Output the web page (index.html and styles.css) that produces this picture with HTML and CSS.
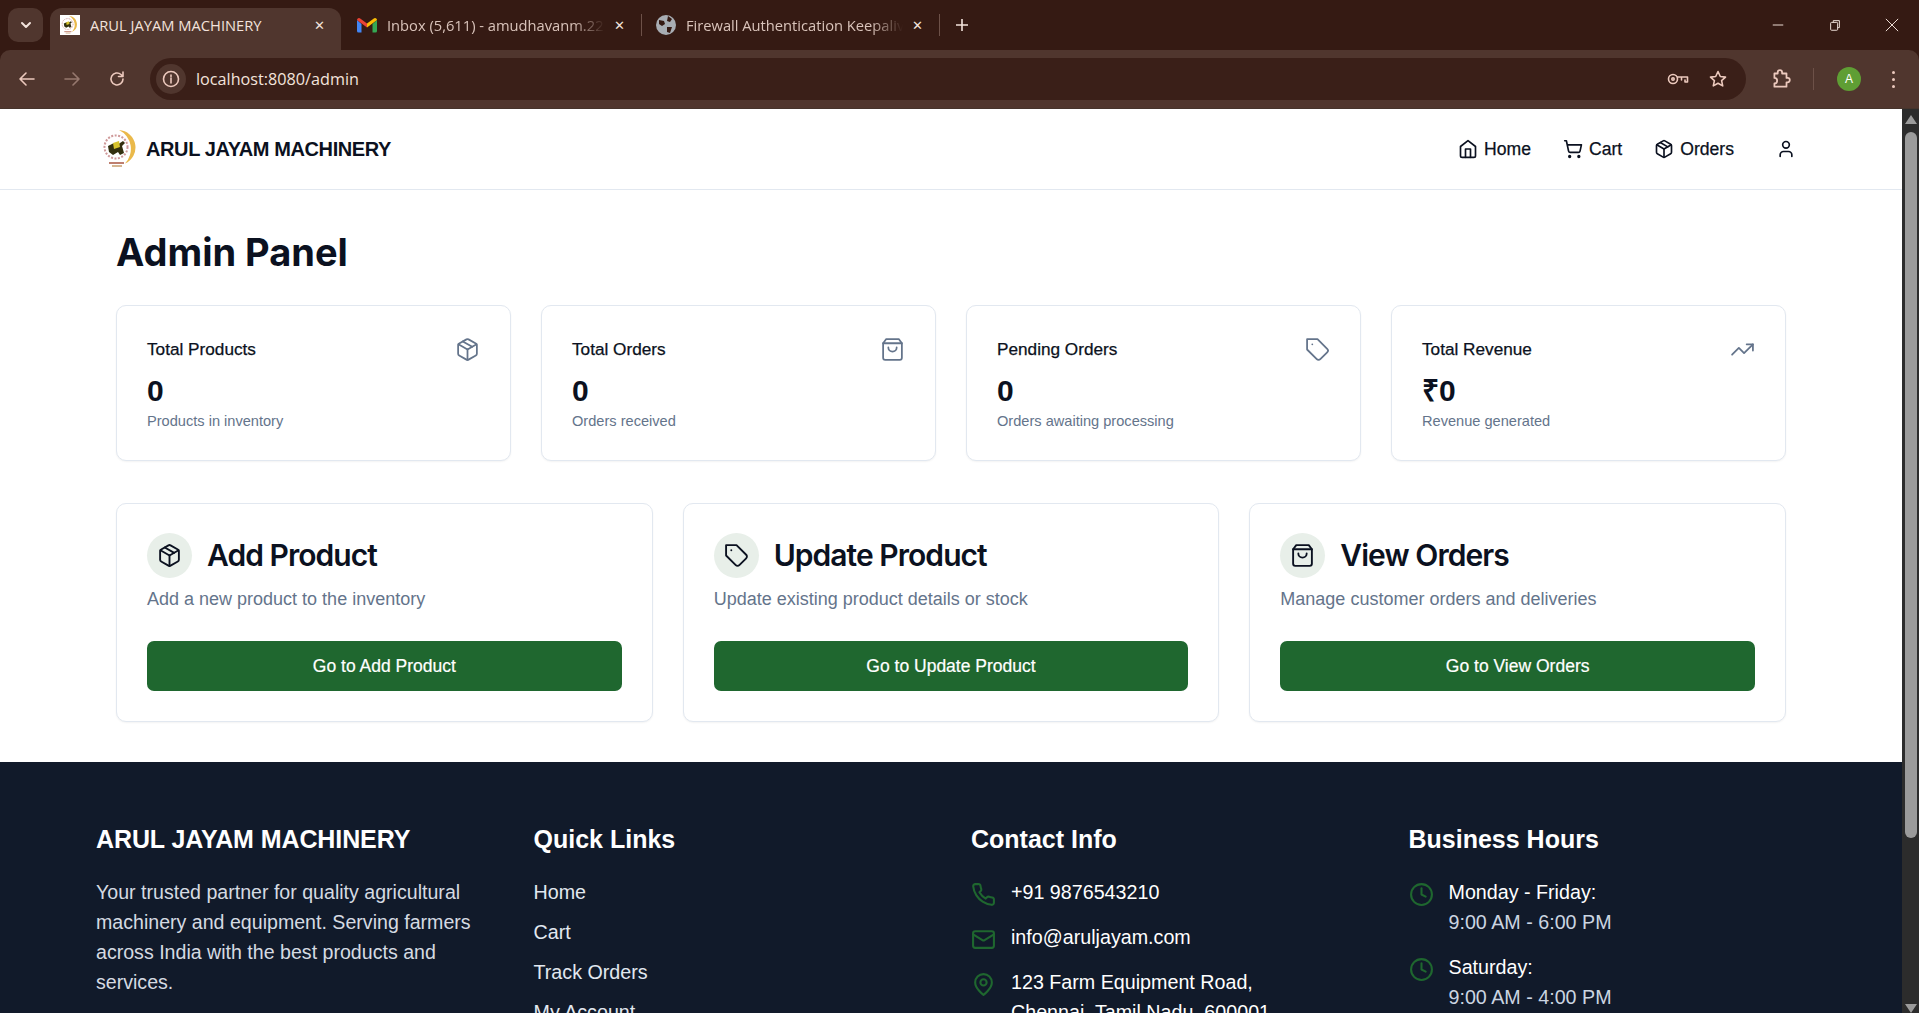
FILE: index.html
```html
<!DOCTYPE html>
<html lang="en">
<head>
    <meta charset="UTF-8">
    <title>ARUL JAYAM MACHINERY</title>
    <link rel="stylesheet" href="styles.css">
</head>
<body>
    <svg class="sprite" xmlns="http://www.w3.org/2000/svg">
        <symbol id="i-home" viewBox="0 0 24 24"><path d="m3 9 9-7 9 7v11a2 2 0 0 1-2 2H5a2 2 0 0 1-2-2z"/><polyline points="9 22 9 12 15 12 15 22"/></symbol>
        <symbol id="i-cart" viewBox="0 0 24 24"><circle cx="8" cy="21" r="1"/><circle cx="19" cy="21" r="1"/><path d="M2.05 2.05h2l2.66 12.42a2 2 0 0 0 2 1.58h9.78a2 2 0 0 0 1.95-1.57l1.65-7.43H5.12"/></symbol>
        <symbol id="i-package" viewBox="0 0 24 24"><path d="m7.5 4.27 9 5.15"/><path d="M21 8a2 2 0 0 0-1-1.73l-7-4a2 2 0 0 0-2 0l-7 4A2 2 0 0 0 3 8v8a2 2 0 0 0 1 1.73l7 4a2 2 0 0 0 2 0l7-4A2 2 0 0 0 21 16Z"/><path d="m3.3 7 8.7 5 8.7-5"/><path d="M12 22V12"/></symbol>
        <symbol id="i-user" viewBox="0 0 24 24"><path d="M19 21v-2a4 4 0 0 0-4-4H9a4 4 0 0 0-4 4v2"/><circle cx="12" cy="7" r="4"/></symbol>
        <symbol id="i-bag" viewBox="0 0 24 24"><path d="M6 2 3 6v14a2 2 0 0 0 2 2h14a2 2 0 0 0 2-2V6l-3-4Z"/><path d="M3 6h18"/><path d="M16 10a4 4 0 0 1-8 0"/></symbol>
        <symbol id="i-tag" viewBox="0 0 24 24"><path d="M12 2H2v10l9.29 9.29c.94.94 2.48.94 3.42 0l6.58-6.58c.94-.94.94-2.48 0-3.42L12 2Z"/><path d="M7 7h.01"/></symbol>
        <symbol id="i-trend" viewBox="0 0 24 24"><polyline points="22 7 13.5 15.5 8.5 10.5 2 17"/><polyline points="16 7 22 7 22 13"/></symbol>
        <symbol id="i-phone" viewBox="0 0 24 24"><path d="M22 16.92v3a2 2 0 0 1-2.18 2 19.79 19.79 0 0 1-8.63-3.07 19.5 19.5 0 0 1-6-6 19.79 19.79 0 0 1-3.07-8.67A2 2 0 0 1 4.11 2h3a2 2 0 0 1 2 1.72 12.84 12.84 0 0 0 .7 2.81 2 2 0 0 1-.45 2.11L8.09 9.91a16 16 0 0 0 6 6l1.27-1.27a2 2 0 0 1 2.11-.45 12.84 12.84 0 0 0 2.81.7A2 2 0 0 1 22 16.92z"/></symbol>
        <symbol id="i-mail" viewBox="0 0 24 24"><rect x="2" y="4" width="20" height="16" rx="2"/><path d="m22 7-8.97 5.7a1.94 1.94 0 0 1-2.06 0L2 7"/></symbol>
        <symbol id="i-pin" viewBox="0 0 24 24"><path d="M20 10c0 6-8 12-8 12s-8-6-8-12a8 8 0 0 1 16 0Z"/><circle cx="12" cy="10" r="3"/></symbol>
        <symbol id="i-clock" viewBox="0 0 24 24"><circle cx="12" cy="12" r="10"/><polyline points="12 6 12 12 16 14"/></symbol>
        <symbol id="i-logo" viewBox="0 0 40 42">
            <path d="M19 2A17.500 17.500 0 0 1 25 35.500A21 21 0 0 0 19 2Z" fill="#eab94a"/>
            <circle cx="16" cy="19" r="11.500" fill="none" stroke="#cf9a9a" stroke-width="2" stroke-dasharray="2 1.500"/>
            <path d="M8 18l6-3 3 2 6-4 2 2-3 3 2 7-4 2-2-3-5 3-4-3z" fill="#33300f"/>
            <path d="M13 15l6-2 1 6-6 2z" fill="#d7c32c"/>
            <path d="M9 35h15" stroke="#a9553f" stroke-width="1.500" fill="none"/>
            <path d="M12 38h10" stroke="#b9854a" stroke-width="1.200" fill="none"/>
        </symbol>
    </svg>

    <div class="browser">
        <div class="tabstrip">
            <div class="tab-menu">
                <svg class="chrome-icon" viewBox="0 0 16 16"><path d="M4 6l4 4 4-4"/></svg>
            </div>
            <div class="tab tab-active">
                <span class="favicon"><svg viewBox="0 0 40 42"><use href="#i-logo"/></svg></span>
                <span class="tab-title">ARUL JAYAM MACHINERY</span>
                <span class="tab-close">✕</span>
            </div>
            <div class="tab tab-gmail">
                <svg class="tab-icon" viewBox="0 0 20 16">
                    <path d="M0 3v11a1.500 1.500 0 0 0 1.500 1.500H4.500V7z" fill="#4285f4"/>
                    <path d="M15.500 7v8.500h3a1.500 1.500 0 0 0 1.500-1.500V3z" fill="#34a853"/>
                    <path d="M0 3a2 2 0 0 1 3.200-1.600L10 6.500v4L0 3z" fill="#ea4335"/>
                    <path d="M20 3a2 2 0 0 0-3.200-1.600L10 6.500v4L20 3z" fill="#fbbc04"/>
                </svg>
                <span class="tab-title faded">Inbox (5,611) - amudhavanm.22</span>
                <span class="tab-close">✕</span>
            </div>
            <span class="tab-divider"></span>
            <div class="tab tab-fire">
                <svg class="tab-icon" viewBox="0 0 20 20">
                    <circle cx="10" cy="10" r="10" fill="#a8adb3"/>
                    <path d="M3 5l5 1 1 3-3 2-3-2zM12 1l4 3-2 3-3-1zM11 12l5 0-2 6-3-1z" fill="#351a13"/>
                </svg>
                <span class="tab-title faded">Firewall Authentication Keepalive</span>
                <span class="tab-close">✕</span>
            </div>
            <span class="tab-divider"></span>
            <svg class="tab-plus" viewBox="0 0 16 16"><path d="M8 2v12M2 8h12"/></svg>
            <div class="window-controls">
                <svg viewBox="0 0 16 16"><path d="M2 8h12"/></svg>
                <svg viewBox="0 0 16 16"><rect x="3" y="5" width="8" height="9" rx="1"/><path d="M6 5V3h7v8h-2"/></svg>
                <svg viewBox="0 0 16 16"><path d="M1 1l14 14M15 1L1 15"/></svg>
            </div>
        </div>
        <div class="toolbar">
            <svg class="chrome-icon tool-btn" viewBox="0 0 20 20"><path d="M17 10H3M9 4l-6 6 6 6"/></svg>
            <svg class="chrome-icon tool-btn dim" viewBox="0 0 20 20"><path d="M3 10h14M11 4l6 6-6 6"/></svg>
            <svg class="chrome-icon tool-btn" viewBox="0 0 20 20"><path d="M16 10a6 6 0 1 1-2-4.500L16 7.500M16 3v4.500h-4.500"/></svg>
            <div class="omnibox">
                <span class="site-info">
                    <svg class="chrome-icon" viewBox="0 0 20 20"><circle cx="10" cy="10" r="7.500"/><path d="M10 9v5M10 6v1.500"/></svg>
                </span>
                <span class="url">localhost:8080/admin</span>
                <svg class="chrome-icon omni-key" viewBox="0 0 24 20"><circle cx="7" cy="10" r="4.500"/><circle cx="7" cy="10" r="1.200"/><path d="M11.500 8h10v5h-2.500v-2M15.500 8v3"/></svg>
                <svg class="chrome-icon omni-star" viewBox="0 0 20 20"><path d="M10 2.500l2.300 5 5.200.6-3.900 3.500 1.100 5.300-4.700-2.700-4.700 2.700 1.100-5.300-3.900-3.500 5.200-.6z"/></svg>
            </div>
            <svg class="chrome-icon tool-ext" viewBox="0 0 20 20"><path d="M4 5h3V4a2 2 0 0 1 4 0v1h4v4h1a2 2 0 0 1 0 4h-1v4H4v-3a2 2 0 0 0 0-5z"/></svg>
            <span class="tool-divider"></span>
            <span class="avatar">A</span>
            <span class="tool-dots"><i></i><i></i><i></i></span>
        </div>

        <div class="viewport">
            <div class="page">
                <header class="site-nav">
                    <div class="wrap nav-inner">
                        <a class="brand">
                            <svg class="brand-logo" viewBox="0 0 40 42"><use href="#i-logo"/></svg>
                            <span>ARUL JAYAM MACHINERY</span>
                        </a>
                        <nav class="nav-links">
                            <a><svg class="ic"><use href="#i-home"/></svg>Home</a>
                            <a><svg class="ic"><use href="#i-cart"/></svg>Cart</a>
                            <a><svg class="ic"><use href="#i-package"/></svg>Orders</a>
                            <a class="nav-user"><svg class="ic"><use href="#i-user"/></svg></a>
                        </nav>
                    </div>
                </header>

                <main class="wrap main">
                    <h1>Admin Panel</h1>

                    <section class="stats">
                        <div class="card stat">
                            <div class="stat-head"><span>Total Products</span><svg class="ic stat-ic"><use href="#i-package"/></svg></div>
                            <div class="stat-value">0</div>
                            <div class="stat-sub">Products in inventory</div>
                        </div>
                        <div class="card stat">
                            <div class="stat-head"><span>Total Orders</span><svg class="ic stat-ic"><use href="#i-bag"/></svg></div>
                            <div class="stat-value">0</div>
                            <div class="stat-sub">Orders received</div>
                        </div>
                        <div class="card stat">
                            <div class="stat-head"><span>Pending Orders</span><svg class="ic stat-ic"><use href="#i-tag"/></svg></div>
                            <div class="stat-value">0</div>
                            <div class="stat-sub">Orders awaiting processing</div>
                        </div>
                        <div class="card stat">
                            <div class="stat-head"><span>Total Revenue</span><svg class="ic stat-ic"><use href="#i-trend"/></svg></div>
                            <div class="stat-value">₹0</div>
                            <div class="stat-sub">Revenue generated</div>
                        </div>
                    </section>

                    <section class="actions">
                        <div class="card action">
                            <div class="action-head"><span class="action-ic"><svg class="ic"><use href="#i-package"/></svg></span><h2>Add Product</h2></div>
                            <p>Add a new product to the inventory</p>
                            <a class="btn">Go to Add Product</a>
                        </div>
                        <div class="card action">
                            <div class="action-head"><span class="action-ic"><svg class="ic"><use href="#i-tag"/></svg></span><h2>Update Product</h2></div>
                            <p>Update existing product details or stock</p>
                            <a class="btn">Go to Update Product</a>
                        </div>
                        <div class="card action">
                            <div class="action-head"><span class="action-ic"><svg class="ic"><use href="#i-bag"/></svg></span><h2>View Orders</h2></div>
                            <p>Manage customer orders and deliveries</p>
                            <a class="btn">Go to View Orders</a>
                        </div>
                    </section>
                </main>

                <footer class="site-footer">
                    <div class="wrap footer-grid">
                        <div>
                            <h3 class="footer-brand">ARUL JAYAM MACHINERY</h3>
                            <p class="about">Your trusted partner for quality agricultural machinery and equipment. Serving farmers across India with the best products and services.</p>
                        </div>
                        <div>
                            <h3>Quick Links</h3>
                            <ul class="links">
                                <li>Home</li>
                                <li>Cart</li>
                                <li>Track Orders</li>
                                <li>My Account</li>
                            </ul>
                        </div>
                        <div>
                            <h3>Contact Info</h3>
                            <ul class="info">
                                <li><svg class="ic"><use href="#i-phone"/></svg><span>+91 9876543210</span></li>
                                <li><svg class="ic"><use href="#i-mail"/></svg><span>info@aruljayam.com</span></li>
                                <li><svg class="ic"><use href="#i-pin"/></svg><span>123 Farm Equipment Road,<br>Chennai, Tamil Nadu, 600001</span></li>
                            </ul>
                        </div>
                        <div>
                            <h3>Business Hours</h3>
                            <ul class="info">
                                <li><svg class="ic"><use href="#i-clock"/></svg><span>Monday - Friday:<br><em>9:00 AM - 6:00 PM</em></span></li>
                                <li><svg class="ic"><use href="#i-clock"/></svg><span>Saturday:<br><em>9:00 AM - 4:00 PM</em></span></li>
                            </ul>
                        </div>
                    </div>
                </footer>
            </div>

            <div class="scrollbar">
                <span class="sb-arrow"></span>
                <span class="sb-thumb"></span>
                <span class="sb-arrow sb-down"></span>
            </div>
        </div>
    </div>
</body>
</html>
```

FILE: styles.css
```css
* {
    box-sizing: border-box;
}

html, body {
    margin: 0;
    padding: 0;
    height: 100%;
    overflow: hidden;
}

body {
    font-family: "Liberation Sans", Arial, sans-serif;
    color: #0b1120;
    background: #fff;
}

.sprite {
    position: absolute;
    width: 0;
    height: 0;
}

.browser {
    display: flex;
    flex-direction: column;
    width: 1919px;
    height: 1013px;
    background: #351a13;
}

/* browser chrome */
.chrome-icon {
    fill: none;
    stroke: #ecc9bd;
    stroke-width: 1.6;
    stroke-linecap: round;
    stroke-linejoin: round;
}

.tabstrip {
    display: flex;
    align-items: flex-end;
    height: 50px;
    padding-left: 8px;
    flex-shrink: 0;
}

.tab-menu {
    display: flex;
    align-items: center;
    justify-content: center;
    width: 35px;
    height: 34px;
    margin-bottom: 8px;
    margin-right: 7px;
    border-radius: 10px;
    background: #50362e;
}

.tab-menu svg {
    width: 16px;
    height: 16px;
    stroke: #f3e3dc;
    stroke-width: 2;
}

.tab {
    display: flex;
    align-items: center;
    height: 42px;
    padding-bottom: 9px;
    font-family: "Open Sans", sans-serif;
    font-size: 14.7px;
    color: #d9c3ba;
}

.tab-active {
    width: 291px;
    padding-left: 10px;
    border-radius: 12px 12px 0 0;
    background: #50362e;
    color: #f3e3dc;
}

.favicon {
    display: flex;
    width: 20px;
    height: 20px;
    background: #fff;
    margin-right: 10px;
    flex-shrink: 0;
}

.tab-title {
    flex: 1;
    white-space: nowrap;
    overflow: hidden;
}

.faded {
    -webkit-mask-image: linear-gradient(to right, #000 85%, transparent);
    mask-image: linear-gradient(to right, #000 85%, transparent);
}

.tab-close {
    width: 16px;
    margin: 0 14px 0 6px;
    font-size: 13px;
    text-align: center;
    color: #f3e3dc;
}

.tab-gmail {
    width: 300px;
    padding-left: 16px;
}

.tab-fire {
    width: 297px;
    padding-left: 14px;
}

.tab-icon {
    width: 20px;
    height: 20px;
    margin-right: 10px;
    flex-shrink: 0;
}

.tab-divider {
    width: 1px;
    height: 22px;
    margin-bottom: 14px;
    background: #6d5148;
}

.tab-plus {
    width: 16px;
    height: 16px;
    margin: 0 0 17px 14px;
    fill: none;
    stroke: #f3e3dc;
    stroke-width: 1.6;
}

.window-controls {
    display: flex;
    align-items: center;
    gap: 43px;
    margin-left: auto;
    margin-right: 20px;
    margin-bottom: 18px;
}

.window-controls svg {
    width: 14px;
    height: 14px;
    fill: none;
    stroke: #f3e3dc;
    stroke-width: 1.1;
}

.toolbar {
    display: flex;
    align-items: center;
    height: 59px;
    padding-left: 17px;
    background: #50362e;
    border-radius: 10px 10px 0 0;
    border-bottom: 1px solid #46342c;
    flex-shrink: 0;
}

.tool-btn {
    width: 20px;
    height: 20px;
    margin-right: 25px;
}

.dim {
    opacity: 0.45;
}

.omnibox {
    display: flex;
    align-items: center;
    width: 1596px;
    height: 42px;
    margin-left: -2px;
    padding: 0 18px 0 6px;
    border-radius: 21px;
    background: #3a1f18;
}

.site-info {
    display: flex;
    align-items: center;
    justify-content: center;
    width: 30px;
    height: 30px;
    border-radius: 50%;
    background: #50362e;
}

.site-info svg {
    width: 20px;
    height: 20px;
}

.url {
    margin-left: 10px;
    font-family: "Open Sans", sans-serif;
    font-size: 16.2px;
    color: #f3e3dc;
}

.omni-key {
    width: 24px;
    height: 20px;
    margin-left: auto;
}

.omni-star {
    width: 20px;
    height: 20px;
    margin-left: 18px;
}

.tool-ext {
    width: 22px;
    height: 22px;
    margin-left: 24px;
}

.tool-divider {
    width: 1px;
    height: 22px;
    margin-left: 21px;
    background: #6d5148;
}

.avatar {
    display: flex;
    align-items: center;
    justify-content: center;
    width: 24px;
    height: 24px;
    margin-left: 23px;
    border-radius: 50%;
    background: #5f9e34;
    color: #fff;
    font-size: 12px;
}

.tool-dots {
    display: flex;
    flex-direction: column;
    gap: 4px;
    margin-left: 31px;
}

.tool-dots i {
    width: 3px;
    height: 3px;
    border-radius: 50%;
    background: #ecc9bd;
}

/* page */
.viewport {
    display: flex;
    flex: 1;
    min-height: 0;
    background: #fff;
}

.page {
    flex: 1;
    min-width: 0;
    overflow: hidden;
}

.wrap {
    width: 1750px;
    margin: 0 auto;
}

.ic {
    width: 20px;
    height: 20px;
    fill: none;
    stroke: currentColor;
    stroke-width: 2;
    stroke-linecap: round;
    stroke-linejoin: round;
    flex-shrink: 0;
}

.site-nav {
    height: 81px;
    border-bottom: 1px solid #e2e8f0;
    background: #fff;
}

.nav-inner {
    display: flex;
    align-items: center;
    justify-content: space-between;
    height: 100%;
    padding: 0 20px;
}

.brand {
    display: flex;
    align-items: center;
    gap: 6px;
    font-size: 20px;
    font-weight: 700;
    letter-spacing: -0.4px;
}

.brand-logo {
    width: 40px;
    height: 42px;
    margin-left: 4px;
}

.nav-links {
    display: flex;
    align-items: center;
    gap: 32px;
    font-size: 17.6px;
    -webkit-text-stroke: 0.25px;
    margin-right: 10px;
}

.nav-links a {
    display: flex;
    align-items: center;
    gap: 6px;
}

.nav-user {
    margin-left: 10px;
}

.main {
    padding: 40px 40px 40px;
}

h1 {
    margin: 0 0 30px;
    font-family: "Inter", sans-serif;
    font-size: 38px;
    line-height: 45px;
    font-weight: 700;
}

.stats {
    display: grid;
    grid-template-columns: repeat(4, 1fr);
    gap: 30px;
    margin-bottom: 42px;
}

.card {
    padding: 29px 30px;
    background: #fff;
    border: 1px solid #e2e8f0;
    border-radius: 10px;
    box-shadow: 0 1px 2px rgba(0, 0, 0, 0.05);
}

.stat {
    height: 156px;
}

.stat-head {
    display: flex;
    align-items: center;
    justify-content: space-between;
    height: 28px;
    font-size: 17.2px;
    -webkit-text-stroke: 0.25px;
}

.stat-ic {
    width: 25px;
    height: 25px;
    color: #64748b;
    stroke-width: 1.7;
}

.stat-value {
    margin-top: 10px;
    font-size: 30px;
    line-height: 36px;
    font-weight: 700;
}

.stat-sub {
    margin-top: 2px;
    font-size: 14.6px;
    line-height: 20px;
    color: #64748b;
}

.actions {
    display: grid;
    grid-template-columns: repeat(3, 1fr);
    gap: 30px;
}

.action {
    height: 219px;
}

.action-head {
    display: flex;
    align-items: center;
    gap: 15px;
}

.action-ic {
    display: flex;
    align-items: center;
    justify-content: center;
    width: 45px;
    height: 45px;
    border-radius: 50%;
    background: #e8efe9;
}

.action-ic .ic {
    width: 25px;
    height: 25px;
    stroke-width: 1.8;
}

.action h2 {
    margin: 0;
    padding-bottom: 2px;
    font-family: "Inter", sans-serif;
    font-size: 30px;
    font-weight: 600;
    letter-spacing: -0.95px;
}

.action p {
    margin: 9px 0 29px;
    font-size: 18px;
    line-height: 25px;
    color: #64748b;
}

.btn {
    display: flex;
    align-items: center;
    justify-content: center;
    height: 50px;
    border-radius: 7px;
    background: #1f672f;
    color: #fff;
    font-size: 17.5px;
    -webkit-text-stroke: 0.2px;
}

.site-footer {
    height: 400px;
    padding-top: 60px;
    background: #111a2a;
    color: #e2e8f0;
}

.footer-grid {
    display: grid;
    grid-template-columns: repeat(4, 1fr);
    gap: 40px;
    padding: 0 20px;
}

.site-footer h3 {
    margin: 0 0 21px;
    font-size: 25px;
    line-height: 34px;
    font-weight: 700;
    color: #fff;
}

.site-footer .footer-brand {
    letter-spacing: -0.1px;
}

.about {
    margin: 0;
    font-size: 19.6px;
    line-height: 30px;
    color: #d5dae2;
}

.links, .info {
    margin: 0;
    padding: 0;
    list-style: none;
    font-size: 19.7px;
    line-height: 30px;
}

.links li {
    margin-bottom: 10px;
}

.info {
    color: #fff;
}

.info li {
    display: flex;
    gap: 15px;
    margin-bottom: 15px;
}

.info .ic {
    width: 25px;
    height: 25px;
    margin-top: 5px;
    color: #1f672f;
}

.info em {
    font-style: normal;
    color: #cbd5e1;
}

/* scrollbar */
.scrollbar {
    display: flex;
    flex-direction: column;
    align-items: center;
    width: 17px;
    background: #2c2c2c;
    flex-shrink: 0;
}

.sb-arrow {
    width: 0;
    height: 0;
    margin-top: 6px;
    border: 6px solid transparent;
    border-top: 0;
    border-bottom: 9px solid #9b9b9b;
}

.sb-thumb {
    width: 12px;
    height: 706px;
    margin-top: 8px;
    border-radius: 6px;
    background: #9b9b9b;
}

.sb-down {
    margin-top: auto;
    transform: rotate(180deg);
}
```
